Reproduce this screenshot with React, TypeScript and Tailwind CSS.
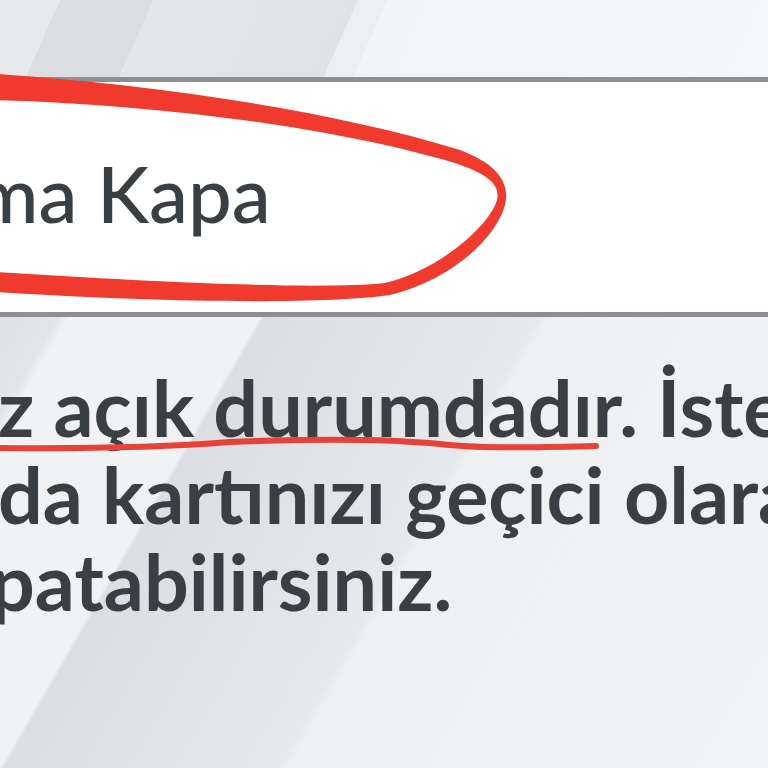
export default function App() {
  return (
    <div className="relative h-[768px] w-[768px] overflow-hidden font-['Lato','Noto_Sans',sans-serif] text-[#3a3f44]">
      <div className="h-[77px] bg-[linear-gradient(114deg,#e8e9eb_0px,#e8e9eb_55px,#dcdde0_55px,#dcdde0_140px,#e5e6e8_140px,#e1e2e5_327px,#eceef0_327px,#eceef0_354px,#f3f4f6_354px,#f5f6f7_100%)]" />

      <div className="h-[240px] border-y-[5px] border-[#8d8f92] bg-white">
        <div className="whitespace-nowrap pt-[72px] text-[78px] leading-none font-medium">
          <span className="ml-[-26px]">ma Kapa</span>
        </div>
      </div>

      <div className="h-[451px] bg-[linear-gradient(120deg,#dfe0e3_0px,#e4e5e8_50px,#f1f2f4_60px,#f1f2f4_225px,#dddee1_229px,#e3e4e7_380px,#e8e9ec_467px,#eef0f2_475px,#f2f3f5_100%)] pt-[46px]">
        <div className="flex flex-col whitespace-nowrap text-[79px] leading-[87px] font-bold">
          <span className="ml-[-2px]">z açık durumdadır. İsteğiniz</span>
          <span className="ml-[-2px]">da kartınızı geçici olarak</span>
          <span className="ml-[-10px]">patabilirsiniz.</span>
        </div>
      </div>

      <svg
        className="pointer-events-none absolute inset-0"
        width="768"
        height="768"
        viewBox="0 0 768 768"
      >
        <path
          d="M -5 74 C 150 84, 330 110, 460 150 C 500 165, 510 185, 505 205 C 495 240, 450 280, 390 295 C 320 305, 150 302, -5 292 L -5 272 C 150 282, 320 290, 385 283 C 440 270, 490 225, 497 200 C 500 185, 490 175, 455 163 C 330 126, 150 104, -5 100 Z"
          fill="#f03a2e"
        />
        <path
          d="M -5 448 C 100 449, 180 446, 230 442 C 330 438, 400 440, 440 444 C 480 449, 540 447, 596 446"
          fill="none"
          stroke="#e8413a"
          strokeWidth="6"
          strokeLinecap="round"
        />
      </svg>
    </div>
  );
}
